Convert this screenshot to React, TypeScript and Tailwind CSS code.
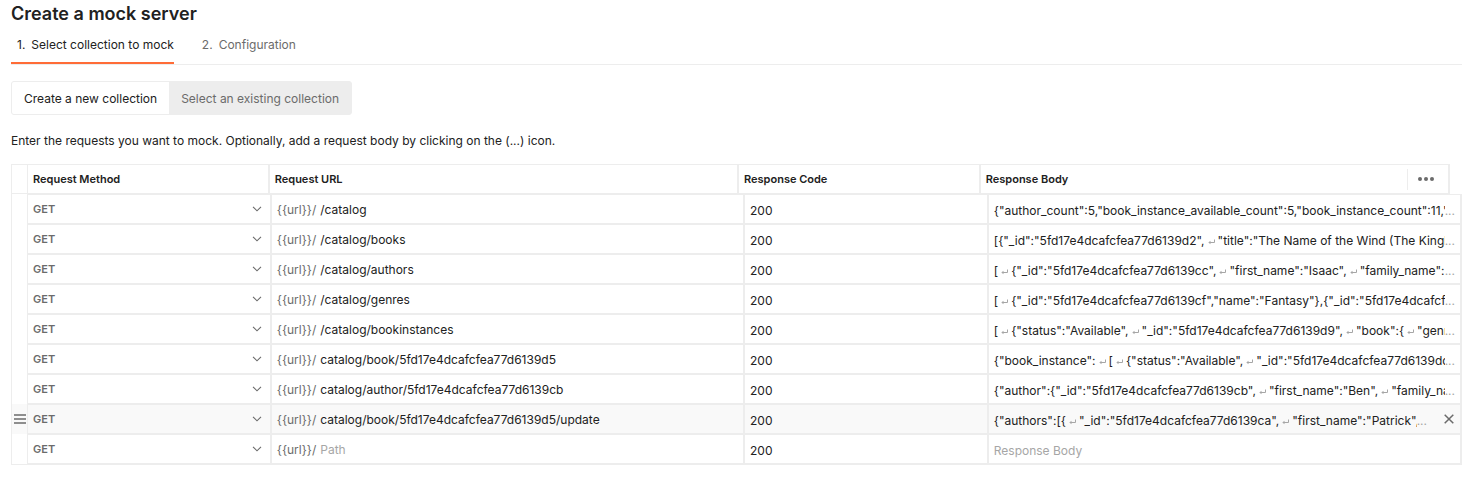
import React, { useState } from "react";

type MockRequest = { path: string; body: string; active?: boolean };

const requests: MockRequest[] = [
  { path: "/catalog", body: '{"author_count":5,"book_instance_available_count":5,"book_instance_count":11,"' },
  { path: "/catalog/books", body: '[{"_id":"5fd17e4dcafcfea77d6139d2",↵"title":"The Name of the Wind (The Kingk' },
  { path: "/catalog/authors", body: '[↵{"_id":"5fd17e4dcafcfea77d6139cc",↵"first_name":"Isaac",↵"family_name":"A' },
  { path: "/catalog/genres", body: '[↵{"_id":"5fd17e4dcafcfea77d6139cf","name":"Fantasy"},{"_id":"5fd17e4dcafcfe' },
  { path: "/catalog/bookinstances", body: '[↵{"status":"Available",↵"_id":"5fd17e4dcafcfea77d6139d9",↵"book":{↵"genre' },
  { path: "catalog/book/5fd17e4dcafcfea77d6139d5", body: '{"book_instance":↵[↵{"status":"Available",↵"_id":"5fd17e4dcafcfea77d6139dc' },
  { path: "catalog/author/5fd17e4dcafcfea77d6139cb", body: '{"author":{"_id":"5fd17e4dcafcfea77d6139cb",↵"first_name":"Ben",↵"family_nam' },
  { path: "catalog/book/5fd17e4dcafcfea77d6139d5/update", body: '{"authors":[{↵"_id":"5fd17e4dcafcfea77d6139ca",↵"first_name":"Patrick",', active: true },
  { path: "", body: "" },
];

function ReturnMark() {
  return (
    <svg width="7" height="6" viewBox="0 0 7 6" fill="none" stroke="#a6a6a6" className="mx-[3px] inline-block align-baseline" aria-hidden="true">
      <path d="M6.5 0.5V3.5H1" />
      <path d="M0.3 3.5L2.5 1.8V5.2Z" fill="#a6a6a6" stroke="none" />
    </svg>
  );
}

function Chevron() {
  return (
    <svg width="10" height="6" viewBox="0 0 10 6" fill="none" stroke="#6b6b6b" className="pointer-events-none -ml-2.5 shrink-0" aria-hidden="true">
      <path d="M1 0.8L5 4.8L9 0.8" strokeWidth="1.1" />
    </svg>
  );
}

function BodyPreview({ body }: { body: string }) {
  return (
    <button type="button" aria-label="Edit response body" className="flex h-full min-w-0 flex-1 items-center pt-1 text-left">
      <span className="min-w-0 flex-1 overflow-hidden whitespace-nowrap">
        {body.split("↵").map((part, i) => (
          <React.Fragment key={i}>
            {i > 0 && <ReturnMark />}
            {part}
          </React.Fragment>
        ))}
      </span>
      <span className="shrink-0 text-[#a6a6a6]">...</span>
    </button>
  );
}

const headCell = "border border-[#ededed] px-[5px] text-left text-[11px] font-semibold flex items-center";
const cell = "flex min-w-0 items-center border border-[#ededed]";

export default function App() {
  const [tab, setTab] = useState(0);
  const [mode, setMode] = useState(0);
  return (
    <main className="bg-white px-[11px] pb-4 font-['Inter',sans-serif] text-[12px] leading-4 text-[#212121]">
      <h1 className="pt-0.5 text-[18px] leading-6 font-semibold">Create a mock server</h1>
      <div role="tablist" className="flex h-[39px] gap-[22px] border-b border-[#ededed]">
        {["Select collection to mock", "Configuration"].map((label, i) => (
          <button
            key={label}
            type="button"
            role="tab"
            aria-selected={tab === i}
            onClick={() => setTab(i)}
            className={`flex gap-1.5 border-b-2 pt-[11px] pl-1.5 ${tab === i ? "border-[#ff6c37]" : "border-transparent text-[#6b6b6b]"}`}
          >
            <span>{i + 1}.</span>
            <span>{label}</span>
          </button>
        ))}
      </div>
      <div className="mt-4 flex">
        <div className="flex h-[34px] overflow-hidden rounded-[3px] border border-[#ededed] bg-[#ededed]">
          {["Create a new collection", "Select an existing collection"].map((label, i) => (
            <button
              key={label}
              type="button"
              aria-pressed={mode === i}
              onClick={() => setMode(i)}
              className={`px-3 pt-0.5 ${mode === i ? "bg-white" : "text-[#6b6b6b]"}`}
            >
              {label}
            </button>
          ))}
        </div>
      </div>
      <p className="mt-[18px]">Enter the requests you want to mock. Optionally, add a request body by clicking on the (...) icon.</p>

      <table className="mt-[15px] block">
        <thead className="mr-3 block border-x border-[#ededed]">
          <tr className="grid h-[30px] grid-cols-[15px_minmax(0,17fr)_minmax(0,33fr)_minmax(0,17fr)_minmax(0,33fr)]">
            <td className="border-y border-[#ededed]" />
            <th className={headCell}>Request Method</th>
            <th className={headCell}>Request URL</th>
            <th className={headCell}>Response Code</th>
            <th className={`${headCell} justify-between`}>
              Response Body
              <button type="button" aria-label="More options" className="flex h-[21px] items-center border-l border-[#ededed] pr-[9px] pl-2.5">
                <svg width="16" height="4" viewBox="0 0 16 4" fill="#6b6b6b" aria-hidden="true">
                  <circle cx="2" cy="2" r="2" />
                  <circle cx="8" cy="2" r="2" />
                  <circle cx="14" cy="2" r="2" />
                </svg>
              </button>
            </th>
          </tr>
        </thead>
        <tbody className="block border-x border-b border-[#ededed]">
          {requests.map((r, i) => (
            <tr
              key={i}
              className={`grid h-[30px] grid-cols-[15px_minmax(0,17fr)_minmax(0,33fr)_minmax(0,17fr)_minmax(0,33fr)] ${r.active ? "bg-[#f9f9f9]" : ""}`}
            >
              <td className="flex items-center justify-center">
                {r.active && (
                  <svg width="12" height="10" viewBox="0 0 12 10" stroke="#6b6b6b" aria-hidden="true">
                    <path d="M0 1H12M0 5H12M0 9H12" strokeWidth="1.6" />
                  </svg>
                )}
              </td>
              <td className={`${cell} pr-2`}>
                <select aria-label="Request method" className="h-full w-full appearance-none bg-transparent pl-[5px] text-[11px] font-semibold text-[#6b6b6b] outline-none">
                  <option>GET</option>
                  <option>POST</option>
                  <option>PUT</option>
                </select>
                <Chevron />
              </td>
              <td className={`${cell} gap-1 px-[5px] pt-0.5`}>
                <span className="text-[#6b6b6b]">{"{{url}}/"}</span>
                <input aria-label="Path" placeholder="Path" defaultValue={r.path} className="min-w-0 flex-1 bg-transparent outline-none placeholder:text-[#a6a6a6]" />
              </td>
              <td className={`${cell} px-[5px] pt-1`}>
                <input aria-label="Response code" defaultValue="200" className="w-full min-w-0 bg-transparent outline-none" />
              </td>
              <td className={`${cell} px-[5px]`}>
                {r.body ? (
                  <BodyPreview body={r.body} />
                ) : (
                  <input aria-label="Response body" placeholder="Response Body" className="w-full min-w-0 bg-transparent pt-1 outline-none placeholder:text-[#a6a6a6]" />
                )}
                {r.active && (
                  <button type="button" aria-label="Remove request" className="ml-4 flex w-3 justify-center">
                    <svg width="10" height="10" viewBox="0 0 10 10" stroke="#6b6b6b" aria-hidden="true">
                      <path d="M0.7 0.7L9.3 9.3M9.3 0.7L0.7 9.3" strokeWidth="1.5" />
                    </svg>
                  </button>
                )}
              </td>
            </tr>
          ))}
        </tbody>
      </table>
    </main>
  );
}
